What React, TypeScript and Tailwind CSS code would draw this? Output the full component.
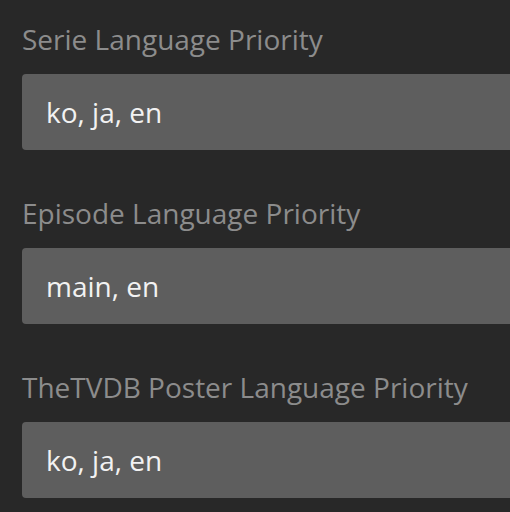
import { useState } from 'react'

const fields = [
  { label: 'Serie Language Priority', value: 'ko, ja, en' },
  { label: 'Episode Language Priority', value: 'main, en' },
  { label: 'TheTVDB Poster Language Priority', value: 'ko, ja, en' },
]

export default function App() {
  const [values, setValues] = useState(fields.map((f) => f.value))

  return (
    <div
      className="min-h-screen overflow-hidden bg-[#282828] pl-[22px] pt-[19px]"
      style={{ fontFamily: '"Open Sans", sans-serif' }}
    >
      <div className="flex w-[600px] flex-col gap-[43px]">
        {fields.map((f, i) => (
          <div key={f.label} className="flex flex-col gap-[15px]">
            <label className="text-[28px] leading-[40px] text-[#8c8c8c]">{f.label}</label>
            <input
              className="h-[76px] w-full rounded-[4px] bg-[#5e5e5e] px-[24px] text-[28px] text-[#f2f2f2] outline-none"
              value={values[i]}
              onChange={(e) => setValues(values.map((v, j) => (j === i ? e.target.value : v)))}
            />
          </div>
        ))}
      </div>
    </div>
  )
}
